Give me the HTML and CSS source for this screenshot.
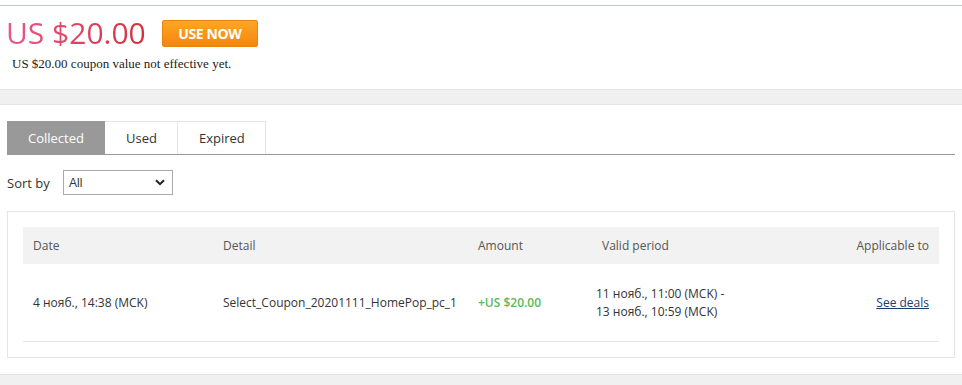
FILE: index.html
```html
<!DOCTYPE html>
<html lang="en">
<head>
    <meta charset="UTF-8">
    <title>My Coupons</title>
    <link rel="stylesheet" href="styles.css">
</head>
<body>
    <div class="summary">
        <div class="summary-row">
            <span class="price">US $20.00</span>
            <button class="use-now">USE NOW</button>
        </div>
        <p class="note">US $20.00 coupon value not effective yet.</p>
    </div>

    <div class="band"></div>

    <div class="content">
        <div class="tabs">
            <div class="tab active">Collected</div>
            <div class="tab">Used</div>
            <div class="tab">Expired</div>
        </div>

        <div class="sort">
            <label for="sortSelect">Sort by</label>
            <div class="select">
                <span>All</span>
                <svg width="10" height="7" viewBox="0 0 10 7"><path d="M1 1.2 L5 5.2 L9 1.2" fill="none" stroke="#222" stroke-width="2"/></svg>
            </div>
        </div>

        <div class="list-box">
            <table class="coupons">
                <colgroup>
                    <col style="width:190px">
                    <col style="width:255px">
                    <col style="width:118px">
                    <col>
                    <col style="width:160px">
                </colgroup>
                <thead>
                    <tr>
                        <th>Date</th>
                        <th>Detail</th>
                        <th>Amount</th>
                        <th class="period-head">Valid period</th>
                        <th class="right">Applicable to</th>
                    </tr>
                </thead>
                <tbody>
                    <tr>
                        <td>4 нояб., 14:38 (MCK)</td>
                        <td>Select_Coupon_20201111_HomePop_pc_1</td>
                        <td class="amount">+US $20.00</td>
                        <td>11 нояб., 11:00 (MCK) -<br>13 нояб., 10:59 (MCK)</td>
                        <td class="right"><a href="#">See deals</a></td>
                    </tr>
                </tbody>
            </table>
        </div>
    </div>

    <div class="band bottom"></div>
</body>
</html>
```

FILE: styles.css
```css
body {
    margin: 0;
    font-family: 'Open Sans', 'Liberation Sans', sans-serif;
    font-size: 13px;
    color: #333;
    background: #fff;
    overflow: hidden;
}

.summary {
    margin-top: 5px;
    border-top: 1px solid #c3c8ca;
    padding: 5px 8px 0 6px;
}

.summary-row {
    display: flex;
    align-items: center;
    height: 44px;
}

.price {
    font-size: 30px;
    line-height: 44px;
    background: linear-gradient(to right, #e8598a, #d52f3b);
    -webkit-background-clip: text;
    background-clip: text;
    color: transparent;
}

.use-now {
    margin: 1px 0 0 16px;
    width: 96px;
    height: 27px;
    padding: 0;
    border: 1px solid #e98410;
    border-radius: 2px;
    background: linear-gradient(#ffa623, #f68512);
    color: #fff;
    font-family: 'Open Sans', sans-serif;
    font-weight: 700;
    font-size: 14px;
    letter-spacing: -0.4px;
}

.note {
    margin: 1px 0 0 6px;
    font-family: 'Liberation Serif', serif;
    font-size: 13px;
    line-height: 15px;
    color: #222;
}

.band {
    margin-top: 18px;
    height: 14px;
    background: #f0f0f0;
    border-top: 1px solid #e4e4e4;
    border-bottom: 1px solid #e4e4e4;
}

.band.bottom {
    margin-top: 16px;
    border-bottom: none;
}

.content {
    padding: 0 7px;
}

.tabs {
    display: flex;
    margin-top: 16px;
    border-bottom: 1px solid #999;
}

.tab {
    height: 32px;
    line-height: 32px;
    padding: 0 20px 0 21px;
    border-top: 1px solid #e5e5e5;
    border-right: 1px solid #e5e5e5;
    color: #333;
}

.tab.active {
    background: #999;
    border-color: #999;
    color: #fff;
}

.sort {
    display: flex;
    align-items: center;
    margin-top: 15px;
}

.sort label {
    width: 56px;
}

.select {
    display: flex;
    align-items: center;
    justify-content: space-between;
    box-sizing: border-box;
    width: 110px;
    height: 25px;
    padding: 0 7px 0 5px;
    border: 1px solid #aaa;
    font-family: 'Liberation Sans', sans-serif;
    font-size: 12px;
    color: #333;
}

.list-box {
    margin-top: 16px;
    border: 1px solid #e5e5e5;
    padding: 15px;
}

.coupons {
    width: 100%;
    border-collapse: collapse;
    table-layout: fixed;
    font-size: 12px;
}

.coupons th {
    height: 37px;
    padding: 0 10px;
    background: #f2f2f2;
    font-weight: normal;
    text-align: left;
    color: #555;
}

.coupons th.period-head {
    padding-left: 16px;
}

.coupons td {
    height: 77px;
    padding: 0 10px;
    line-height: 18px;
    border-bottom: 1px solid #e5e5e5;
    color: #333;
}

.coupons .right {
    text-align: right;
}

.coupons .amount {
    color: #5cb85c;
    font-weight: 600;
}

.coupons a {
    color: #1c3b6b;
    text-decoration: underline;
}
```
